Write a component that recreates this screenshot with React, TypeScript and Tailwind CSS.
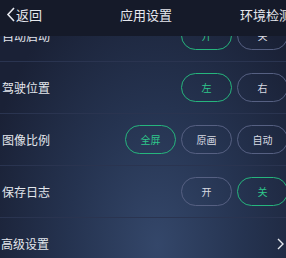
const font = { fontFamily: '"Noto Sans CJK SC", "Noto Sans", sans-serif' };

type Opt = { label: string; on?: boolean };

function Pill({ label, on }: Opt) {
  return (
    <div
      className={
        "flex h-[29px] w-[51px] shrink-0 items-center justify-center rounded-full border text-[10px] " +
        (on ? "border-[#26b57d] text-[#2fc88c]" : "border-[#566082] text-[#d8dbe3]")
      }
    >
      {label}
    </div>
  );
}

function Row({ title, opts }: { title: string; opts: Opt[] }) {
  return (
    <div className="flex h-[52px] items-center justify-between border-b border-[#2a3450] pl-[2px]">
      <span className="text-[12px] text-[#e3e6ec]">{title}</span>
      <div className="-mr-[2px] flex gap-[5px]">
        {opts.map((o) => (
          <Pill key={o.label} label={o.label} on={o.on} />
        ))}
      </div>
    </div>
  );
}

export default function App() {
  return (
    <div
      className="relative h-[258px] w-[286px] overflow-hidden bg-[radial-gradient(ellipse_at_55%_95%,#34476a_0%,#253350_40%,#1a2136_80%)]"
      style={font}
    >
      {/* lista desplazada, la primera fila queda bajo la cabecera */}
      <div className="flex flex-col pt-[10px]">
        <Row title="自动启动" opts={[{ label: "开", on: true }, { label: "关" }]} />
        <Row title="驾驶位置" opts={[{ label: "左", on: true }, { label: "右" }]} />
        <Row title="图像比例" opts={[{ label: "全屏", on: true }, { label: "原画" }, { label: "自动" }]} />
        <Row title="保存日志" opts={[{ label: "开" }, { label: "关", on: true }]} />
        <div className="flex h-[52px] items-center justify-between pl-[1px] pr-[2px]">
          <span className="text-[12px] text-[#e3e6ec]">高级设置</span>
          <svg width="7" height="12" viewBox="0 0 7 12" fill="none">
            <path d="M1 1l5 5-5 5" stroke="#e3e6ec" strokeWidth="1.4" />
          </svg>
        </div>
      </div>

      {/* cabecera */}
      <div className="absolute left-0 right-0 top-0 flex h-[36px] items-start bg-[#151a29] pt-[5px] text-[13px] text-[#e6e8ee]">
        <div className="flex w-[100px] shrink-0 items-center pl-[6px]">
          <svg width="9" height="15" viewBox="0 0 9 15" fill="none">
            <path d="M8 1L2 7.5 8 14" stroke="#e6e8ee" strokeWidth="1.6" />
          </svg>
          <span className="ml-[1px]">返回</span>
        </div>
        <div className="ml-[20px] w-[60px] shrink-0 whitespace-nowrap">应用设置</div>
        <div className="ml-[60px] shrink-0 whitespace-nowrap">环境检测</div>
      </div>
    </div>
  );
}
